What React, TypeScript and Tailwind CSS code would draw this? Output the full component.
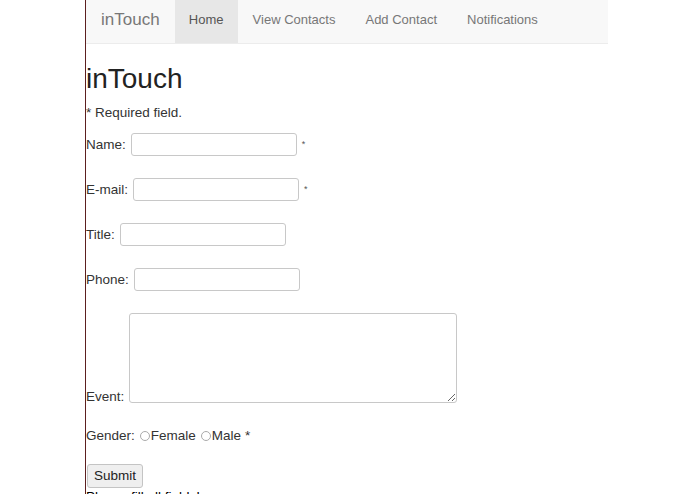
import * as React from 'react';

const font = { fontFamily: '"Liberation Sans", Arial, sans-serif' };

function NavBar() {
  const items = ['View Contacts', 'Add Contact', 'Notifications'];
  return (
    <div className="flex h-[44px] w-[522px] items-stretch border-b border-[#ececec] bg-[#f8f8f8]">
      <span className="flex items-center pb-[4px] pl-[15px] pr-[15px] text-[17px] text-[#777]">inTouch</span>
      <span className="flex w-[63px] items-center justify-center bg-[#e7e7e7] pb-[4px] text-[13px] text-[#555]">Home</span>
      {items.map(item => (
        <span key={item} className="flex items-center px-[15px] pb-[4px] text-[13px] text-[#777]">{item}</span>
      ))}
    </div>
  );
}

function Field({ label, star }: { label: string; star?: boolean }) {
  return (
    <div className="flex h-[23px] items-center">
      <span className="text-[13.5px] leading-[18px]">{label}</span>
      <input type="text" className="ml-[5px] h-[23px] w-[166px] rounded-[3px] border border-[#c8c8c8] bg-white" />
      {star && <span className="ml-[5px] text-[9px] text-[#555]">*</span>}
    </div>
  );
}

function Radio({ text }: { text: string }) {
  return (
    <span className="inline-flex items-center">
      <span className="mr-[1px] ml-[5px] inline-block h-[10px] w-[10px] rounded-full border border-[#aaa]" />
      {text}
    </span>
  );
}

export default function App() {
  return (
    <div className="min-h-[494px] w-full bg-white text-[#333]" style={font}>
      <div className="ml-[85px] min-h-[494px] border-l border-[#5c1f1f]">
        <NavBar />
        <h1 className="mt-[19px] h-[31px] text-[28px] leading-[31px] text-[#222]">inTouch</h1>
        <p className="mt-[10px] text-[13.5px] leading-[18px]">* Required field.</p>
        <div className="mt-[11px] flex flex-col gap-[22px]">
          <Field label="Name:" star />
          <Field label="E-mail:" star />
          <Field label="Title:" />
          <Field label="Phone:" />
          <div className="flex items-end">
            <span className="-mb-[3px] text-[13.5px] leading-[18px]">Event:</span>
            <textarea className="ml-[5px] h-[90px] w-[328px] rounded-[3px] border border-[#c8c8c8] bg-white" />
          </div>
        </div>
        <div className="mt-[24px] flex items-center text-[13.5px] leading-[18px]">
          <span>Gender:</span>
          <Radio text="Female" />
          <Radio text="Male" />
          <span className="ml-[4px]">*</span>
        </div>
        <button className="mt-[19px] ml-[1px] h-[24px] w-[56px] rounded-[3px] border border-[#c4c4c4] bg-[#efefef] text-[13.5px] text-[#222]">
          Submit
        </button>
        <p className="text-[13.5px] leading-[18px] text-black">Please fill all fields!</p>
      </div>
    </div>
  );
}
